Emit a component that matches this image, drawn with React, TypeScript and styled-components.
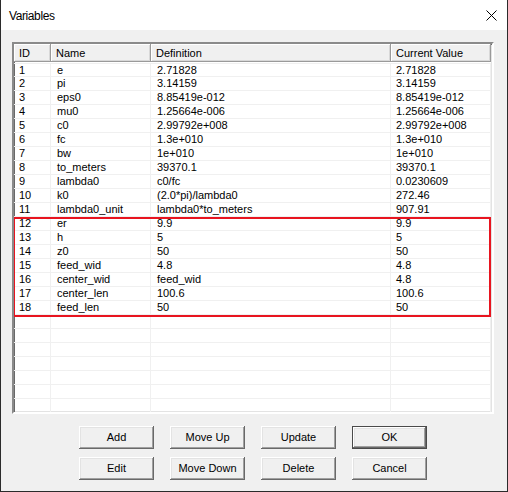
import React from "react";
import styled, { createGlobalStyle } from "styled-components";

const Global = createGlobalStyle`
  html, body { margin: 0; padding: 0; background: #f0f0f0; }
  * { box-sizing: border-box; }
`;

const Window = styled.div`
  width: 508px;
  height: 492px;
  background: #f0f0f0;
  border: 1px solid #2b2b2b;
  border-top: none;
  display: flex;
  flex-direction: column;
  font-family: "Liberation Sans", Arial, sans-serif;
  font-size: 11px;
  color: #000;
`;

const TitleBar = styled.div`
  height: 30px;
  background: #fff;
  display: flex;
  align-items: center;
  justify-content: space-between;
  padding: 0 10px 0 8px;
`;

const Title = styled.span`
  font-size: 12px;
  letter-spacing: -0.4px;
  padding-top: 2px;
`;

const Body = styled.div`
  flex: 1;
  padding: 12px 13px 0 11px;
  display: flex;
  flex-direction: column;
`;

const ListBox = styled.div`
  position: relative;
  width: 482px;
  height: 372px;
  background: #fff;
  border-style: solid;
  border-width: 2px;
  border-color: #8a8a8a #ffffff #ffffff #8a8a8a;
  box-shadow: inset 1px 1px 0 #696969, inset -1px -1px 0 #e3e3e3;
  overflow: hidden;
`;

const Cols = "37px 100px 240px 100px";

const HeaderRow = styled.div`
  display: grid;
  grid-template-columns: ${Cols};
  height: 18px;
`;

const HeaderCell = styled.div`
  background: #f0f0f0;
  padding-left: 5px;
  line-height: 18px;
  white-space: nowrap;
  box-shadow: inset -1px -1px 0 #9a9a9a, inset 1px 1px 0 #ffffff, inset -2px -2px 0 #d8d8d8;
`;

const Rows = styled.div`
  padding-top: 1px;
`;

const Row = styled.div`
  display: grid;
  grid-template-columns: ${Cols};
  &:first-child > div { border-top: 1px solid #f0f0f0; }
`;

const Cell = styled.div<{ $pad?: number }>`
  height: 14px;
  line-height: 13px;
  padding-left: ${(p) => p.$pad ?? 6}px;
  border-right: 1px solid #f0f0f0;
  border-bottom: 1px solid #f0f0f0;
  white-space: nowrap;
  overflow: hidden;
`;

const Highlight = styled.div`
  position: absolute;
  left: -1px;
  top: 173px;
  width: 478px;
  height: 100px;
  border: 2px solid #e8141f;
  pointer-events: none;
`;

const ButtonGrid = styled.div`
  display: grid;
  grid-template-columns: repeat(4, 75px);
  column-gap: 16px;
  row-gap: 8px;
  padding: 12px 0 0 67px;
`;

const Button = styled.button<{ $default?: boolean }>`
  width: 75px;
  height: 23px;
  font-family: "Liberation Sans", Arial, sans-serif;
  font-size: 11px;
  color: #000;
  background: #f0f0f0;
  border: ${(p) => (p.$default ? "1px solid #4a4a4a" : "none")};
  box-shadow: inset -1px -1px 0 #696969, inset 1px 1px 0 #ffffff, inset -2px -2px 0 #a0a0a0, inset 2px 2px 0 #e3e3e3;
  padding: 0;
  padding-bottom: 1px;
`;

const data: [number, string, string, string][] = [
  [1, "e", "2.71828", "2.71828"],
  [2, "pi", "3.14159", "3.14159"],
  [3, "eps0", "8.85419e-012", "8.85419e-012"],
  [4, "mu0", "1.25664e-006", "1.25664e-006"],
  [5, "c0", "2.99792e+008", "2.99792e+008"],
  [6, "fc", "1.3e+010", "1.3e+010"],
  [7, "bw", "1e+010", "1e+010"],
  [8, "to_meters", "39370.1", "39370.1"],
  [9, "lambda0", "c0/fc", "0.0230609"],
  [10, "k0", "(2.0*pi)/lambda0", "272.46"],
  [11, "lambda0_unit", "lambda0*to_meters", "907.91"],
  [12, "er", "9.9", "9.9"],
  [13, "h", "5", "5"],
  [14, "z0", "50", "50"],
  [15, "feed_wid", "4.8", "4.8"],
  [16, "center_wid", "feed_wid", "4.8"],
  [17, "center_len", "100.6", "100.6"],
  [18, "feed_len", "50", "50"],
];

const rows: (string | number)[][] = [...data];
while (rows.length < 25) rows.push(["", "", "", ""]);

export default function App() {
  return (
    <>
      <Global />
      <Window>
        <TitleBar>
          <Title>Variables</Title>
          <svg width="11" height="11" viewBox="0 0 11 11">
            <path d="M0.5 0.5 L10.5 10.5 M10.5 0.5 L0.5 10.5" stroke="#000" strokeWidth="1" fill="none" />
          </svg>
        </TitleBar>
        <Body>
          <ListBox>
            <HeaderRow>
              <HeaderCell>ID</HeaderCell>
              <HeaderCell>Name</HeaderCell>
              <HeaderCell>Definition</HeaderCell>
              <HeaderCell>Current Value</HeaderCell>
            </HeaderRow>
            <Rows>
              {rows.map((r, i) => (
                <Row key={i}>
                  <Cell $pad={5}>{r[0]}</Cell>
                  <Cell>{r[1]}</Cell>
                  <Cell>{r[2]}</Cell>
                  <Cell $pad={5}>{r[3]}</Cell>
                </Row>
              ))}
            </Rows>
            <Highlight />
          </ListBox>
          <ButtonGrid>
            <Button>Add</Button>
            <Button>Move Up</Button>
            <Button>Update</Button>
            <Button $default>OK</Button>
            <Button>Edit</Button>
            <Button>Move Down</Button>
            <Button>Delete</Button>
            <Button>Cancel</Button>
          </ButtonGrid>
        </Body>
      </Window>
    </>
  );
}
